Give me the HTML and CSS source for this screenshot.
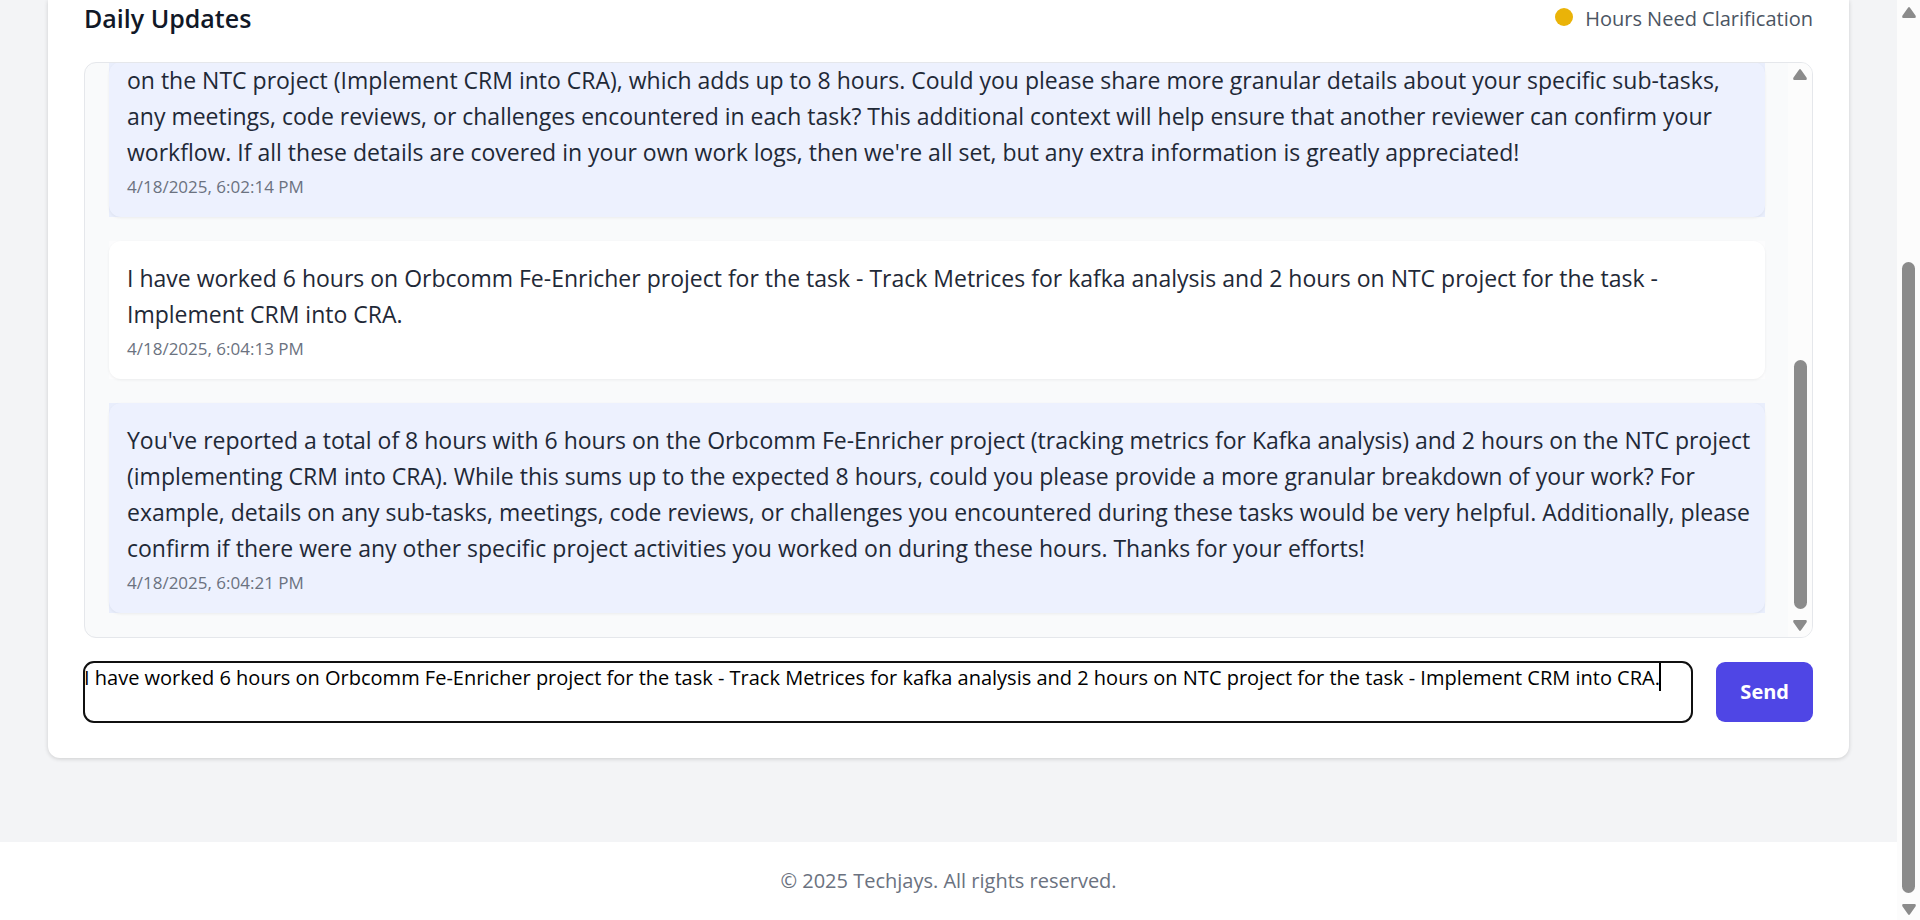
FILE: index.html
```html
<!DOCTYPE html>
<html lang="en">
<head>
<meta charset="utf-8">
<title>Daily Updates</title>
<link rel="stylesheet" href="styles.css">
</head>
<body class="page">
<div class="content">
  <main class="main">
    <section class="card">
      <header class="card-header">
        <h2 class="card-title">Daily Updates</h2>
        <p class="status"><span class="status-dot"></span>Hours Need Clarification</p>
      </header>
      <div class="chat">
        <ul class="messages">
          <li class="row row-bot">
            <div class="message message-bot message-clipped">
              <p class="text">on the NTC project (Implement CRM into CRA), which adds up to 8 hours. Could you please share more granular details about your specific sub-tasks,<br> any meetings, code reviews, or challenges encountered in each task? This additional context will help ensure that another reviewer can confirm your<br> workflow. If all these details are covered in your own work logs, then we're all set, but any extra information is greatly appreciated!</p>
              <time class="time">4/18/2025, 6:02:14 PM</time>
            </div>
          </li>
          <li class="row row-user">
            <div class="message message-user">
              <p class="text">I have worked 6 hours on Orbcomm Fe-Enricher project for the task - Track Metrices for kafka analysis and 2 hours on NTC project for the task -<br> Implement CRM into CRA.</p>
              <time class="time">4/18/2025, 6:04:13 PM</time>
            </div>
          </li>
          <li class="row row-bot">
            <div class="message message-bot">
              <p class="text">You've reported a total of 8 hours with 6 hours on the Orbcomm Fe-Enricher project (tracking metrics for Kafka analysis) and 2 hours on the NTC project<br> (implementing CRM into CRA). While this sums up to the expected 8 hours, could you please provide a more granular breakdown of your work? For<br> example, details on any sub-tasks, meetings, code reviews, or challenges you encountered during these tasks would be very helpful. Additionally, please<br> confirm if there were any other specific project activities you worked on during these hours. Thanks for your efforts!</p>
              <time class="time">4/18/2025, 6:04:21 PM</time>
            </div>
          </li>
        </ul>
        <div class="scrollbar chat-scrollbar" aria-hidden="true">
          <svg class="arrow" viewBox="0 0 14 11"><path d="M6 .8Q7-.6 8 .8L13.500 8.500Q14.500 11 12.500 11H1.500Q-.5 11 .5 8.500Z"/></svg>
          <div class="track"><div class="thumb chat-thumb"></div></div>
          <svg class="arrow" viewBox="0 0 14 11"><path d="M6 10.200Q7 11.600 8 10.200L13.500 2.500Q14.500 0 12.500 0H1.500Q-.5 0 .5 2.500Z"/></svg>
        </div>
      </div>
      <form class="composer">
        <div class="field">
          <textarea class="input" aria-label="Message" spellcheck="false">I have worked 6 hours on Orbcomm Fe-Enricher project for the task - Track Metrices for kafka analysis and 2 hours on NTC project for the task - Implement CRM into CRA.</textarea>
          <span class="caret"></span>
        </div>
        <button class="send" type="button">Send</button>
      </form>
    </section>
  </main>
  <footer class="footer">© 2025 Techjays. All rights reserved.</footer>
</div>
<div class="scrollbar page-scrollbar" aria-hidden="true">
  <svg class="arrow" viewBox="0 0 14 11"><path d="M6 .8Q7-.6 8 .8L13.500 8.500Q14.500 11 12.500 11H1.500Q-.5 11 .5 8.500Z"/></svg>
  <div class="track"><div class="thumb page-thumb"></div></div>
  <svg class="arrow" viewBox="0 0 14 11"><path d="M6 10.200Q7 11.600 8 10.200L13.500 2.500Q14.500 0 12.500 0H1.500Q-.5 0 .5 2.500Z"/></svg>
</div>
</body>
</html>
```
FILE: styles.css
```css
* {
  box-sizing: border-box;
}

.page {
  margin: 0;
  display: flex;
  min-height: 100vh;
  background: #f3f4f6;
  color: #1f2937;
  font-family: "Open Sans", "Noto Sans", sans-serif;
  font-size: 20px;
  line-height: 30px;
}

.content {
  flex: 1;
  min-width: 0;
  display: flex;
  flex-direction: column;
}

.main {
  flex: 1;
  padding: 0 48px 84px;
}

.card {
  padding: 0 36px 36px;
  background: #fff;
  border-radius: 0 0 12px 12px;
  box-shadow: 0 1px 4px rgba(0, 0, 0, 0.16);
}

.card-header {
  display: flex;
  align-items: flex-end;
  justify-content: space-between;
  margin-bottom: 24px;
}

.card-title {
  margin: 0 0 2px;
  color: #111827;
  font-size: 25px;
  font-weight: 600;
  line-height: 36px;
}

.status {
  display: flex;
  align-items: center;
  gap: 12px;
  margin: 0 0 4px;
  color: #4b5563;
}

.status-dot {
  width: 18px;
  height: 18px;
  margin-bottom: 4px;
  border-radius: 50%;
  background: #eab308;
}

.chat {
  display: flex;
  height: 576px;
  margin-bottom: 24px;
  overflow: hidden;
  border: 1px solid #e5e7eb;
  border-radius: 12px;
  background: #f9fafb;
}

.messages {
  flex: 1;
  min-width: 0;
  display: flex;
  flex-direction: column;
  justify-content: flex-end;
  gap: 24px;
  margin: 0;
  padding: 0 23px 24px 24px;
  list-style: none;
}

.row-bot {
  background: #e9eefc;
}

.row-user {
  background: #fcfcfd;
}

.message {
  padding: 19px 12px 18px 18px;
  border-radius: 12px;
  box-shadow: 0 1px 3px rgba(0, 0, 0, 0.06);
}

.message-bot {
  background: #edf1fe;
}

.message-user {
  background: #fff;
}

.message-clipped {
  padding-top: 0;
}

.text {
  margin: 0 0 5px;
  font-size: 23px;
  line-height: 36px;
}

.time {
  display: block;
  color: #6b7280;
  font-size: 17px;
  line-height: 24px;
}

.scrollbar {
  display: flex;
  flex-direction: column;
  align-items: center;
  gap: 11px;
  background: #fcfcfc;
}

.chat-scrollbar {
  width: 24px;
  padding: 6px 0;
}

.page-scrollbar {
  width: 23px;
  padding: 7px 0 5px;
}

.arrow {
  width: 14px;
  height: 11px;
  fill: #8b8b8b;
}

.track {
  flex: 1;
  display: flex;
  flex-direction: column;
  justify-content: flex-end;
}

.thumb {
  width: 13px;
  border-radius: 7px;
  background: #8b8b8b;
}

.chat-thumb {
  height: 48%;
}

.page-thumb {
  height: 73%;
}

.composer {
  display: flex;
  gap: 24px;
}

.field {
  position: relative;
  flex: 1;
  display: flex;
}

.input {
  flex: 1;
  height: 60px;
  padding: 1px 0;
  overflow: hidden;
  resize: none;
  border: 0;
  border-radius: 10px;
  outline: 2px solid #101010;
  outline-offset: -1px;
  background: #fff;
  color: #000;
  font: inherit;
}

.caret {
  position: absolute;
  top: 1px;
  right: 31px;
  width: 2px;
  height: 28px;
  background: #000;
}

.send {
  padding: 0 24px;
  border: 0;
  border-radius: 9px;
  background: #4f46e5;
  color: #fff;
  font: inherit;
  font-weight: 700;
}

.footer {
  padding: 24px;
  background: #fff;
  color: #6b7280;
  text-align: center;
}
```
